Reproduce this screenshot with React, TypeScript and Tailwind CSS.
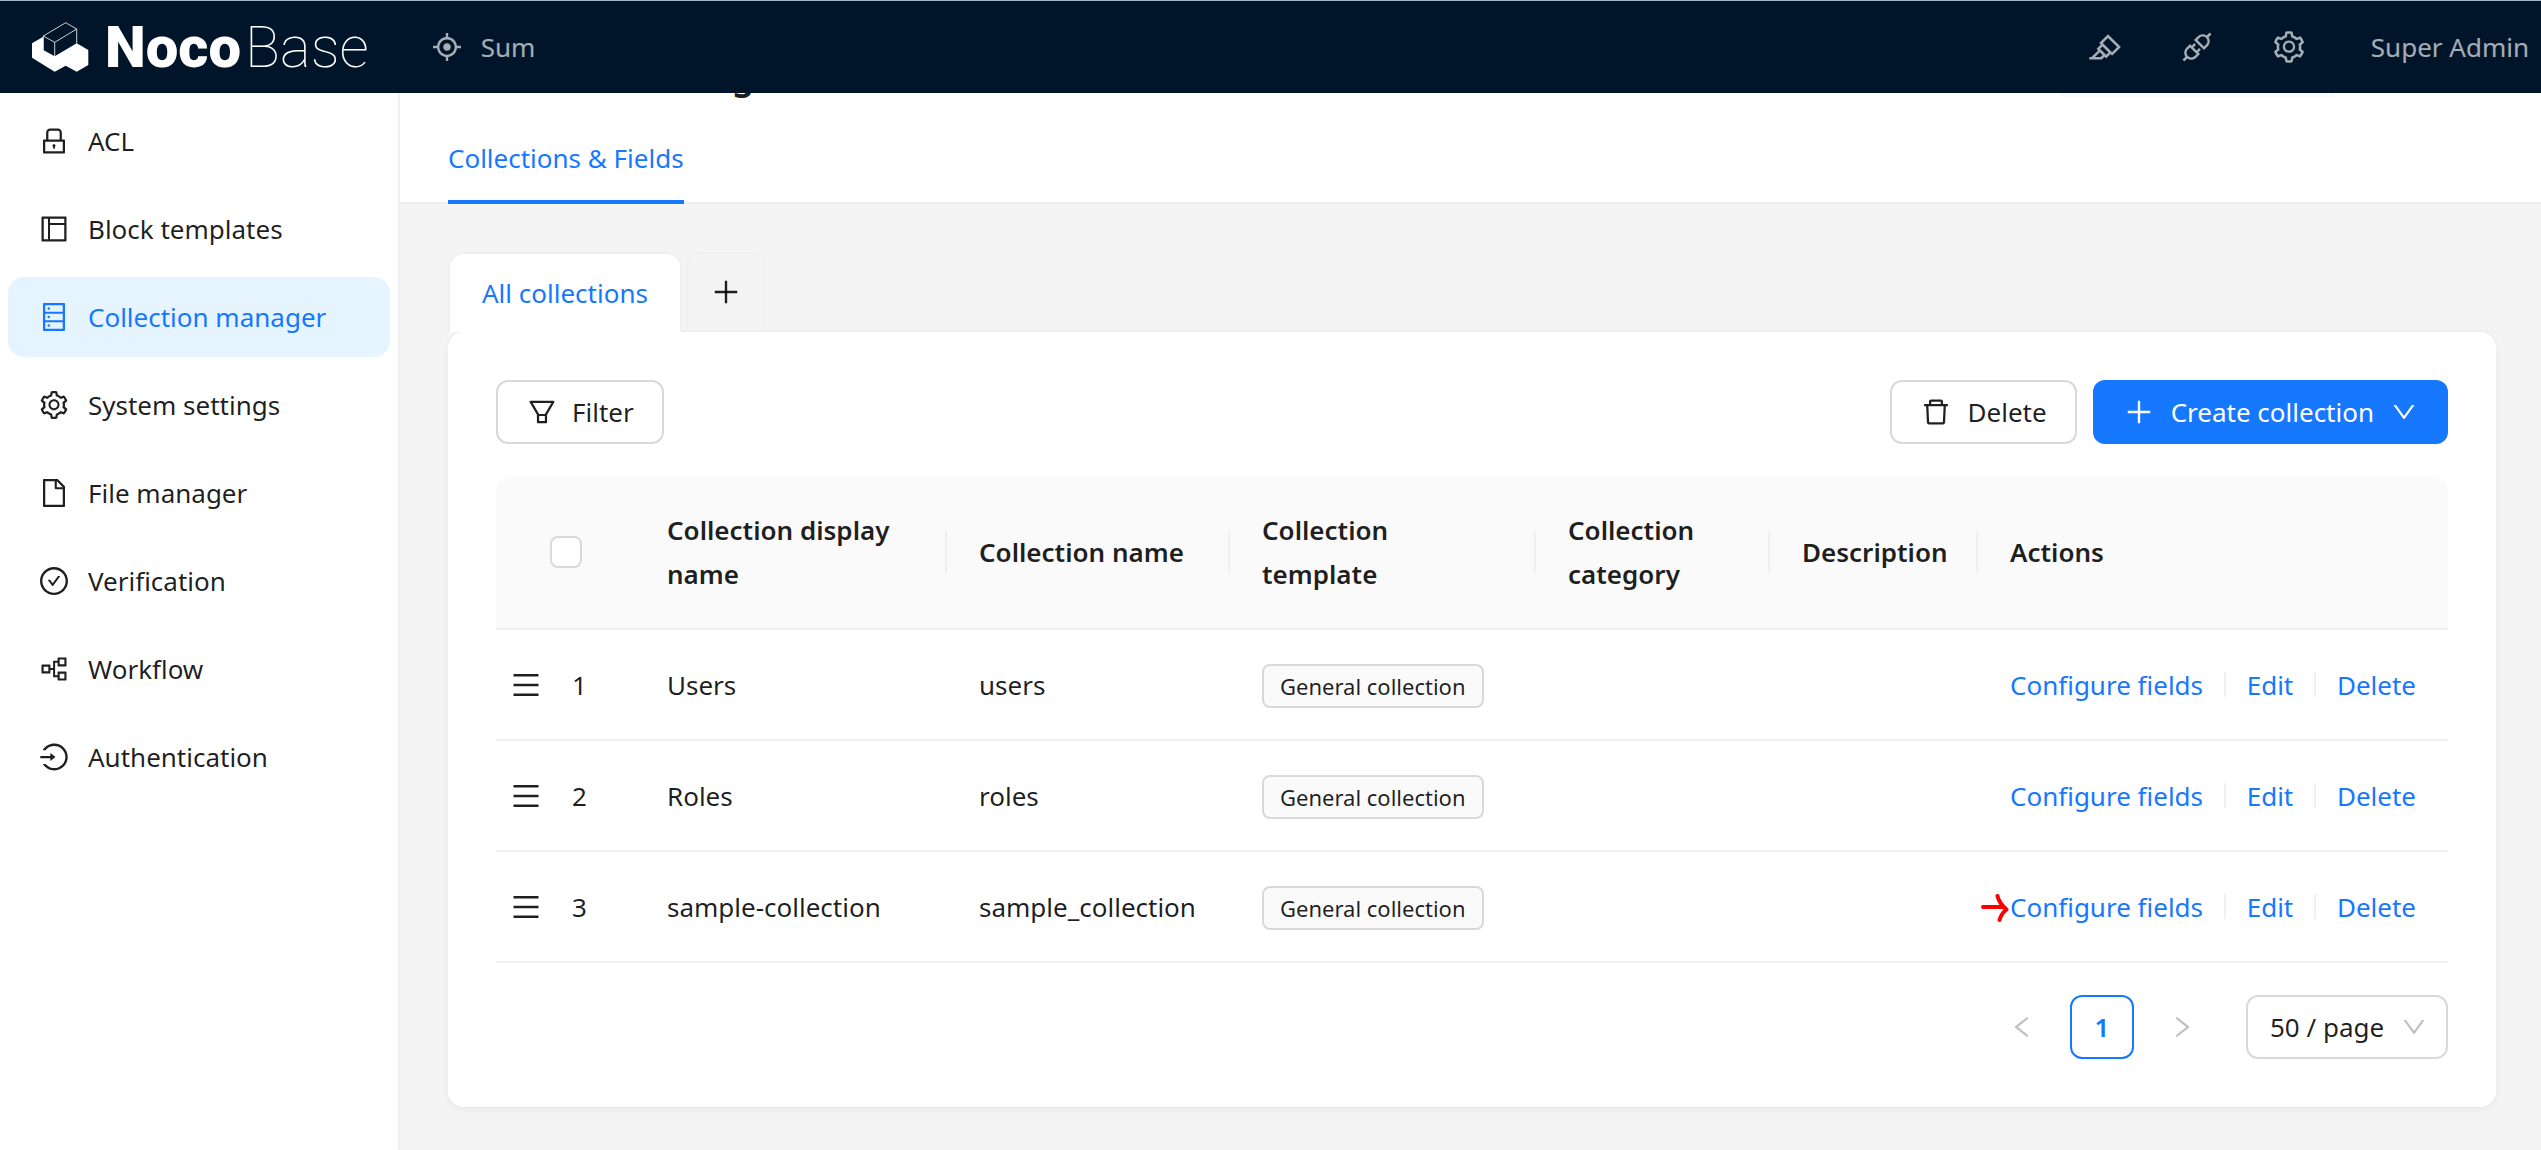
import type { ReactNode } from "react";
import type { IconType } from "react-icons";
import {
  AiOutlineAim,
  AiOutlineApi,
  AiOutlineCheckCircle,
  AiOutlineDatabase,
  AiOutlineDelete,
  AiOutlineDown,
  AiOutlineFile,
  AiOutlineFilter,
  AiOutlineHighlight,
  AiOutlineLayout,
  AiOutlineLeft,
  AiOutlineLock,
  AiOutlineLogin,
  AiOutlineMenu,
  AiOutlinePartition,
  AiOutlinePlus,
  AiOutlineRight,
  AiOutlineSetting,
} from "react-icons/ai";

const menu: { label: string; icon: IconType; active?: boolean }[] = [
  { label: "ACL", icon: AiOutlineLock },
  { label: "Block templates", icon: AiOutlineLayout },
  { label: "Collection manager", icon: AiOutlineDatabase, active: true },
  { label: "System settings", icon: AiOutlineSetting },
  { label: "File manager", icon: AiOutlineFile },
  { label: "Verification", icon: AiOutlineCheckCircle },
  { label: "Workflow", icon: AiOutlinePartition },
  { label: "Authentication", icon: AiOutlineLogin },
];

const rows = [
  { title: "Users", name: "users", template: "General collection" },
  { title: "Roles", name: "roles", template: "General collection" },
  { title: "sample-collection", name: "sample_collection", template: "General collection", marked: true },
];

function Logo() {
  return (
    <a href="#" aria-label="NocoBase" className="flex items-center text-white">
      <svg viewBox="0 0 57 50" className="mr-4 h-[50px] w-[57px]" fill="none">
        <path
          d="M0 21.3 11.3 14.7V28L22.7 34.3 44.7 21.3 56.3 28V43L44.7 49.7 33.7 43.7 22.7 49.7 0 35.7Z"
          fill="#fff"
        />
        <path
          d="M11.3 28V14L33.7.7 44.7 7V21.3M11.3 14 22.7 20.3 44.7 7M22.7 20.3V34"
          stroke="#fff"
          strokeOpacity=".8"
          strokeWidth="1"
        />
      </svg>
      <span className="flex gap-1 font-['Roboto',sans-serif] text-[58px] leading-[68px]">
        <span className="font-black">Noco</span>
        <span className="font-thin">Base</span>
      </span>
    </a>
  );
}

function Header() {
  return (
    <header className="flex h-[93px] shrink-0 items-center border-t border-[#9fb3cc] bg-[#001529] pl-8 pr-3 text-white/65">
      <Logo />
      <a href="#" className="ml-[62px] flex items-center gap-[18px]">
        <AiOutlineAim size={32} />
        Sum
      </a>
      <nav className="ml-auto flex items-center">
        <button aria-label="UI editor" className="px-7"><AiOutlineHighlight size={36} /></button>
        <button aria-label="Plugin manager" className="px-7"><AiOutlineApi size={36} /></button>
        <button aria-label="Settings" className="px-7"><AiOutlineSetting size={36} /></button>
        <button className="ml-9">Super Admin</button>
      </nav>
    </header>
  );
}

function Sidebar() {
  return (
    <aside className="w-[400px] shrink-0 border-r-2 border-[#f0f0f0] bg-white">
      <nav className="flex flex-col gap-2 p-2">
        {menu.map(({ label, icon: Icon, active }) => (
          <a
            key={label}
            href="#"
            className={
              active
                ? "flex h-20 items-center gap-[18px] rounded-2xl bg-[#e6f4ff] px-[30px] text-[#1677ff]"
                : "flex h-20 items-center gap-[18px] rounded-2xl px-[30px]"
            }
          >
            <Icon size={32} />
            {label}
          </a>
        ))}
      </nav>
    </aside>
  );
}

function HeadCell({ children }: { children: ReactNode }) {
  return (
    <th scope="col" className="relative border-b-2 border-[#f0f0f0] px-8 py-8 text-left font-semibold">
      {children}
      <span className="absolute right-0 top-1/2 h-11 w-[2px] -translate-y-1/2 bg-[#f0f0f0]" />
    </th>
  );
}

function Cell({ children }: { children?: ReactNode }) {
  return <td className="h-[111px] border-b-2 border-[#f0f0f0] px-8">{children}</td>;
}

function Separator() {
  return <span className="mx-[21px] h-[25px] w-[2px] bg-[#f0f0f0]" />;
}

function CollectionsTable() {
  return (
    <table className="mt-8 w-full table-fixed border-separate border-spacing-0">
      <colgroup>
        <col className="w-[139px]" />
        <col className="w-[312px]" />
        <col className="w-[283px]" />
        <col className="w-[306px]" />
        <col className="w-[234px]" />
        <col className="w-[208px]" />
        <col />
      </colgroup>
      <thead className="bg-[#fafafa]">
        <tr>
          <th scope="col" className="rounded-tl-2xl border-b-2 border-[#f0f0f0] pl-[54px] text-left">
            <input
              type="checkbox"
              aria-label="Select all"
              className="block h-8 w-8 appearance-none rounded-lg border-2 border-[#d9d9d9] bg-white"
            />
          </th>
          <HeadCell>Collection display name</HeadCell>
          <HeadCell>Collection name</HeadCell>
          <HeadCell>Collection template</HeadCell>
          <HeadCell>Collection category</HeadCell>
          <HeadCell>Description</HeadCell>
          <th scope="col" className="rounded-tr-2xl border-b-2 border-[#f0f0f0] px-8 text-left font-semibold">
            Actions
          </th>
        </tr>
      </thead>
      <tbody>
        {rows.map((row, i) => (
          <tr key={row.name}>
            <td className="border-b-2 border-[#f0f0f0] pl-[14px]">
              <div className="flex items-center gap-[30px]">
                <button aria-label="Drag row"><AiOutlineMenu size={32} /></button>
                {i + 1}
              </div>
            </td>
            <Cell>{row.title}</Cell>
            <Cell>{row.name}</Cell>
            <Cell>
              <span className="inline-block rounded-lg border-2 border-[#d9d9d9] bg-[#fafafa] px-4 align-middle text-[22px] leading-10">
                {row.template}
              </span>
            </Cell>
            <Cell />
            <Cell />
            <Cell>
              <div className="relative flex items-center whitespace-nowrap text-[#1677ff]">
                {row.marked && (
                  <svg viewBox="0 0 28 32" className="absolute -left-[29px] h-8 w-7" fill="none" stroke="#f00" strokeWidth="4" strokeLinecap="round" strokeLinejoin="round">
                    <path d="M2 16H22M16.500 5Q18 12 25.500 18.500Q20 23 18.500 29" />
                  </svg>
                )}
                <a href="#">Configure fields</a>
                <Separator />
                <a href="#">Edit</a>
                <Separator />
                <a href="#">Delete</a>
              </div>
            </Cell>
          </tr>
        ))}
      </tbody>
    </table>
  );
}

export default function App() {
  return (
    <div className="flex h-screen flex-col overflow-hidden bg-[#f4f4f4] font-['Noto_Sans',sans-serif] text-[26px] leading-[44px] text-black/88">
      <Header />
      <div className="flex min-h-0 flex-1">
        <Sidebar />
        <main className="min-w-0 flex-1 overflow-hidden">
          <div className="relative flex h-[111px] flex-col justify-end border-b-2 border-[#f0f0f0] bg-white px-12">
            <span className="absolute right-[206px] top-0 h-1 w-[276px] bg-[#fafafa]" />
            <h1 className="mb-2 text-[36px] font-semibold leading-[64px]">Collection manager</h1>
            <div role="tablist" className="-mb-[2px] flex">
              <button role="tab" aria-selected="true" className="h-[88px] border-b-4 border-[#1677ff] text-[#1677ff]">
                Collections &amp; Fields
              </button>
            </div>
          </div>
          <div className="py-12 pl-12 pr-[45px]">
            <div role="tablist" className="flex gap-1 border-b-2 border-[#f0f0f0]">
              <button
                role="tab"
                aria-selected="true"
                className="-mb-[2px] h-20 rounded-t-2xl border-2 border-b-0 border-[#f0f0f0] bg-white px-8 text-[#1677ff]"
              >
                All collections
              </button>
              <button aria-label="Add category" className="-mb-[2px] flex h-20 w-20 items-center justify-center rounded-t-2xl border-2 border-[#f0f0f0]">
                <AiOutlinePlus size={32} />
              </button>
            </div>
            <section className="rounded-2xl bg-white p-12 shadow-[0_2px_6px_rgba(0,0,0,0.06)]">
              <div className="flex gap-4">
                <button className="mr-auto flex h-16 items-center gap-[14px] rounded-xl border-2 border-[#d9d9d9] px-7">
                  <AiOutlineFilter size={32} />
                  Filter
                </button>
                <button className="flex h-16 items-center gap-4 rounded-xl border-2 border-[#d9d9d9] px-7">
                  <AiOutlineDelete size={32} />
                  Delete
                </button>
                <button className="flex h-16 items-center gap-4 rounded-xl bg-[#1677ff] px-[30px] text-white">
                  <AiOutlinePlus size={32} />
                  Create collection
                  <AiOutlineDown size={28} />
                </button>
              </div>
              <CollectionsTable />
              <nav aria-label="Pagination" className="mt-8 flex items-center justify-end">
                <button aria-label="Previous page" className="mr-4 flex h-16 w-16 items-center justify-center text-black/25">
                  <AiOutlineLeft size={28} />
                </button>
                <button aria-current="page" className="h-16 w-16 rounded-xl border-2 border-[#1677ff] font-semibold text-[#1677ff]">
                  1
                </button>
                <button aria-label="Next page" className="ml-4 flex h-16 w-16 items-center justify-center text-black/25">
                  <AiOutlineRight size={28} />
                </button>
                <div className="relative ml-8">
                  <select
                    aria-label="Page size"
                    className="block h-16 w-[202px] appearance-none rounded-xl border-2 border-[#d9d9d9] bg-white pl-[22px]"
                  >
                    <option>50 / page</option>
                  </select>
                  <AiOutlineDown size={28} className="pointer-events-none absolute right-5 top-[18px] text-black/25" />
                </div>
              </nav>
            </section>
          </div>
        </main>
      </div>
    </div>
  );
}
